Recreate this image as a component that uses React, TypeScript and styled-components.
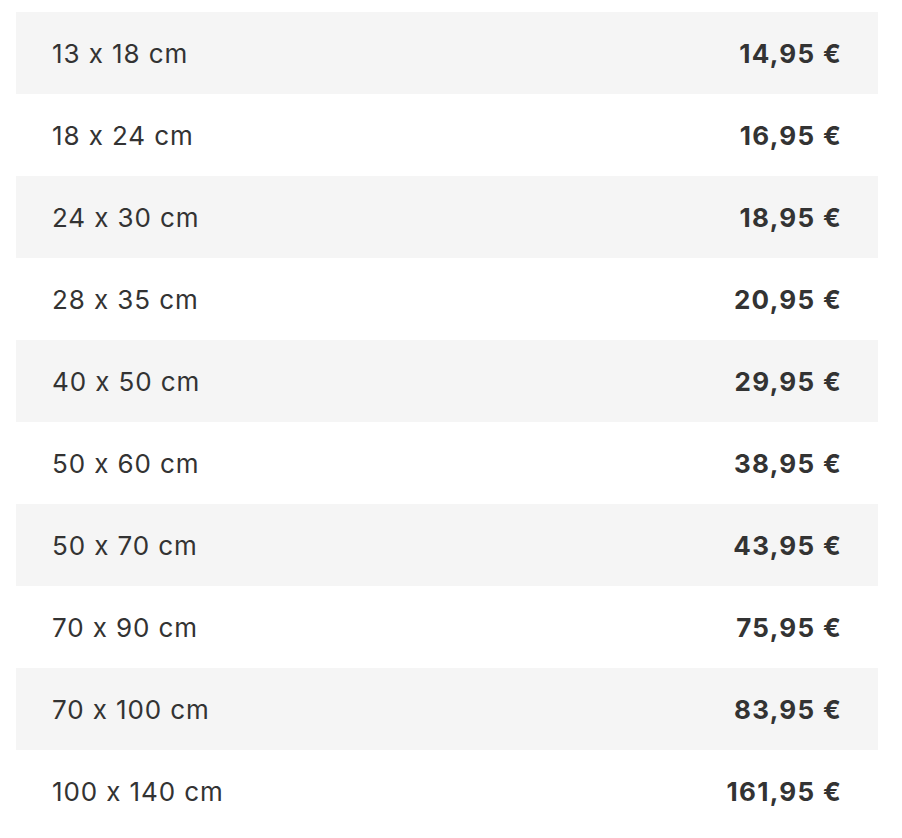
import React from "react";
import styled, { createGlobalStyle } from "styled-components";

const GlobalStyle = createGlobalStyle`
	body {
		margin: 0;
		background: #ffffff;
		font-family: Inter, "Noto Sans", sans-serif;
	}
`;

const Container = styled.div`
	padding: 12px 24px 6px 16px;
`;

const PriceList = styled.ul`
	list-style: none;
	margin: 0;
	padding: 0;
`;

const Row = styled.li<{ $shaded: boolean }>`
	display: flex;
	justify-content: space-between;
	align-items: center;
	height: 82px;
	padding: 0 36px 0 36px;
	box-sizing: border-box;
	background-color: ${props => (props.$shaded ? "#f5f5f5" : "#ffffff")};
	color: #333333;
	font-size: 26px;
	font-feature-settings: "calt" 0;
`;

const Size = styled.span`
	font-weight: 400;
	letter-spacing: 0.9px;
`;

const Price = styled.span`
	font-weight: 650;
	letter-spacing: 1.3px;
`;

const prices = [
	{ size: "13 x 18 cm", price: "14,95 €" },
	{ size: "18 x 24 cm", price: "16,95 €" },
	{ size: "24 x 30 cm", price: "18,95 €" },
	{ size: "28 x 35 cm", price: "20,95 €" },
	{ size: "40 x 50 cm", price: "29,95 €" },
	{ size: "50 x 60 cm", price: "38,95 €" },
	{ size: "50 x 70 cm", price: "43,95 €" },
	{ size: "70 x 90 cm", price: "75,95 €" },
	{ size: "70 x 100 cm", price: "83,95 €" },
	{ size: "100 x 140 cm", price: "161,95 €" },
];

export default function App() {
	return (
		<Container>
			<GlobalStyle />
			<PriceList>
				{prices.map((item, i) => (
					<Row key={item.size} $shaded={i % 2 === 0}>
						<Size>{item.size}</Size>
						<Price>{item.price}</Price>
					</Row>
				))}
			</PriceList>
		</Container>
	);
}
